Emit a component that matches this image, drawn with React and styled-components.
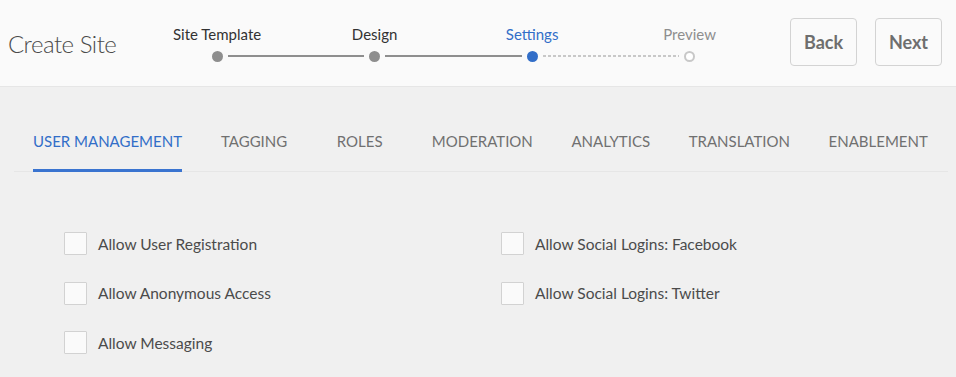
import React from "react";
import styled, { createGlobalStyle } from "styled-components";

const FONT = `"Lato", "Noto Sans", sans-serif`;

const Global = createGlobalStyle`
  html, body { margin: 0; padding: 0; background: #f0f0f0; }
  body { font-family: ${FONT}; -webkit-font-smoothing: antialiased; }
  * { box-sizing: border-box; }
`;

const Header = styled.header`
  display: flex;
  align-items: center;
  height: 87px;
  padding: 0 14px 0 8px;
  background: #fafafa;
  border-bottom: 1px solid #e6e6e6;
`;

const Title = styled.h1`
  margin: 0;
  font-size: 24px;
  font-weight: 300;
  color: #4b4b4b;
  letter-spacing: -0.5px;
`;

const Stepper = styled.div`
  margin-left: 22px;
  display: flex;
  flex-direction: column;
  gap: 7px;
  margin-top: -1px;
`;

const Labels = styled.div`
  display: grid;
  grid-template-columns: repeat(4, 157.5px);
`;

const StepLabel = styled.span`
  text-align: center;
  font-size: 15px;
  line-height: 20px;
  color: ${(p) => (p.$state === "active" ? "#326ec8" : p.$state === "todo" ? "#8e8e8e" : "#323232")};
`;

const Track = styled.div`
  display: flex;
  align-items: center;
  padding: 0 73.25px;
  height: 11px;
`;

const Dot = styled.span`
  flex: none;
  width: 11px;
  height: 11px;
  border-radius: 50%;
  background: ${(p) => (p.$state === "active" ? "#326ec8" : p.$state === "todo" ? "#ffffff" : "#8e8e8e")};
  border: ${(p) => (p.$state === "todo" ? "2px solid #c8c8c8" : "none")};
`;

const Line = styled.span`
  flex: 1;
  height: 2px;
  margin: 0 5px;
  background: ${(p) =>
    p.$dashed
      ? "repeating-linear-gradient(to right, #c8c8c8 0 3px, transparent 3px 5px)"
      : "#8e8e8e"};
`;

const Actions = styled.div`
  margin-left: auto;
  display: flex;
  gap: 18px;
  margin-top: -2px;
`;

const Button = styled.button`
  height: 48px;
  min-width: 67px;
  padding: 0;
  border: 1px solid #d3d3d3;
  border-radius: 4px;
  background: #fafafa;
  font-family: ${FONT};
  font-weight: 700;
  font-size: 18px;
  color: #6e6e6e;
  cursor: pointer;
`;

const TabBar = styled.nav`
  display: flex;
  gap: 38.6px;
  margin: 29px 8px 0 14px;
  padding-left: 19px;
  border-bottom: 1px solid #e6e6e6;
`;

const Tab = styled.div`
  min-width: 67px;
  text-align: center;
  padding: 15px 0 18px;
  line-height: 20px;
  font-size: 15px;
  text-transform: uppercase;
  color: ${(p) => (p.$active ? "#326ec8" : "#707070")};
  border-bottom: 3px solid ${(p) => (p.$active ? "#3a74d0" : "transparent")};
  margin-bottom: -1px;
`;

const Options = styled.section`
  display: grid;
  grid-template-columns: 437px auto;
  padding: 60px 0 0 64px;
`;

const Column = styled.div`
  display: flex;
  flex-direction: column;
  gap: 26.5px;
`;

const Option = styled.label`
  display: flex;
  align-items: center;
  gap: 11px;
  font-size: 15.5px;
  color: #4b4b4b;
`;

const Box = styled.span`
  flex: none;
  width: 23px;
  height: 23px;
  background: #fafafa;
  border: 1px solid #d2d2d2;
  border-radius: 1px;
`;

const steps = [
  { label: "Site Template", state: "done" },
  { label: "Design", state: "done" },
  { label: "Settings", state: "active" },
  { label: "Preview", state: "todo" },
];

const tabs = ["User Management", "Tagging", "Roles", "Moderation", "Analytics", "Translation", "Enablement"];

const left = ["Allow User Registration", "Allow Anonymous Access", "Allow Messaging"];
const right = ["Allow Social Logins: Facebook", "Allow Social Logins: Twitter"];

export default function App() {
  return (
    <>
      <Global />
      <Header>
        <Title>Create Site</Title>
        <Stepper>
          <Labels>
            {steps.map((s) => (
              <StepLabel key={s.label} $state={s.state}>{s.label}</StepLabel>
            ))}
          </Labels>
          <Track>
            <Dot $state="done" />
            <Line />
            <Dot $state="done" />
            <Line />
            <Dot $state="active" />
            <Line $dashed />
            <Dot $state="todo" />
          </Track>
        </Stepper>
        <Actions>
          <Button>Back</Button>
          <Button>Next</Button>
        </Actions>
      </Header>
      <TabBar>
        {tabs.map((t, i) => (
          <Tab key={t} $active={i === 0}>{t}</Tab>
        ))}
      </TabBar>
      <Options>
        <Column>
          {left.map((l) => (
            <Option key={l}><Box />{l}</Option>
          ))}
        </Column>
        <Column>
          {right.map((l) => (
            <Option key={l}><Box />{l}</Option>
          ))}
        </Column>
      </Options>
    </>
  );
}
